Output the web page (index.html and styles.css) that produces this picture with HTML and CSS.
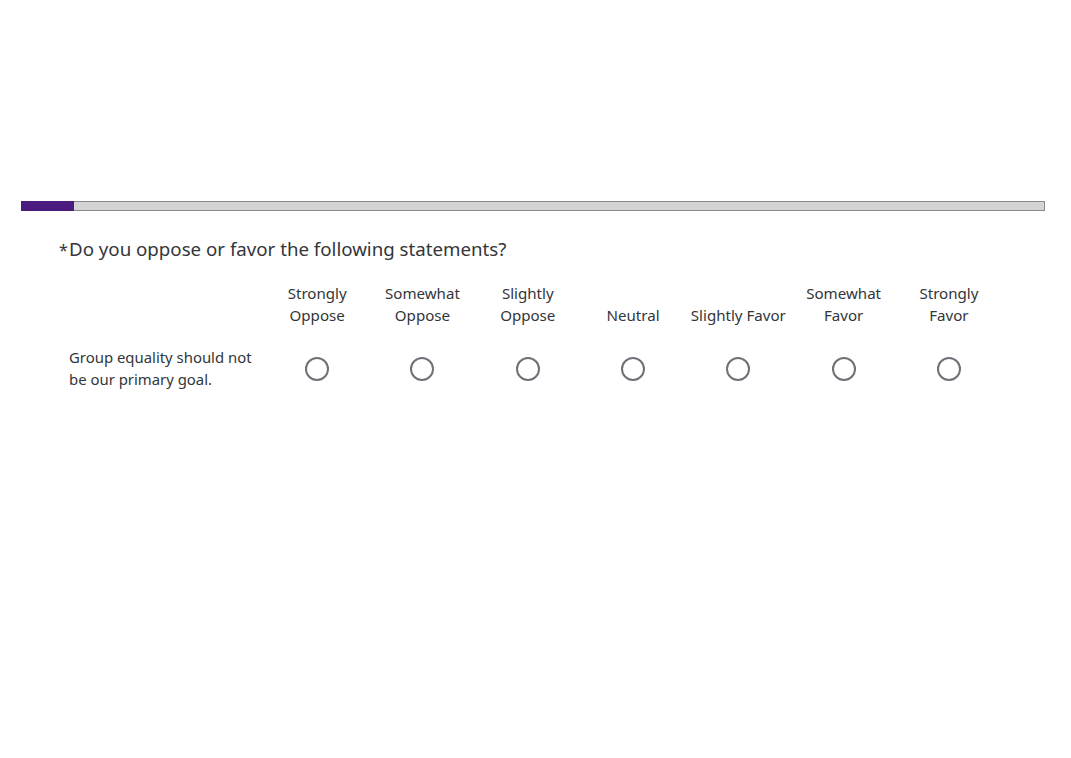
FILE: index.html
```html
<!DOCTYPE html>
<html>
<head>
<meta charset="utf-8">
<link rel="stylesheet" href="styles.css">
</head>
<body>
<div class="page">
  <div class="progress"><div class="progress-fill"></div></div>
  <div class="question">
    <div class="qtext"><span class="req">*</span>Do you oppose or favor the following statements?</div>
    <div class="matrix">
      <div class="row header">
        <div class="label"></div>
        <div class="col">Strongly<br>Oppose</div>
        <div class="col">Somewhat<br>Oppose</div>
        <div class="col">Slightly<br>Oppose</div>
        <div class="col">Neutral</div>
        <div class="col">Slightly Favor</div>
        <div class="col">Somewhat<br>Favor</div>
        <div class="col">Strongly<br>Favor</div>
      </div>
      <div class="row answers">
        <div class="label">Group equality should not be our primary goal.</div>
        <div class="col"><span class="radio"></span></div>
        <div class="col"><span class="radio"></span></div>
        <div class="col"><span class="radio"></span></div>
        <div class="col"><span class="radio"></span></div>
        <div class="col"><span class="radio"></span></div>
        <div class="col"><span class="radio"></span></div>
        <div class="col"><span class="radio"></span></div>
      </div>
    </div>
  </div>
</div>
</body>
</html>
```
FILE: styles.css
```css
html, body {
  margin: 0;
  padding: 0;
  background: #fff;
}
body {
  font-family: "Noto Sans", "Open Sans", sans-serif;
  color: #32363a;
}
.page {
  padding: 201px 26px 0 21px;
}
.progress {
  height: 8px;
  background: #d4d4d4;
  border: 1px solid #89898f;
  border-left: none;
}
.progress-fill {
  width: 53px;
  height: 10px;
  margin-top: -1px;
  background: #4a1c80;
}
.question {
  padding: 26px 0 0 37px;
}
.qtext {
  font-size: 18.7px;
  line-height: 24px;
}
.req {
  display: inline-block;
  width: 10px;
  margin-left: 1px;
  font-size: 16px;
}
.matrix {
  margin-top: 20px;
  margin-left: 11px;
}
.row {
  display: grid;
  grid-template-columns: 195.5px repeat(7, 105.3px);
  align-items: end;
}
.header .col {
  text-align: center;
  font-size: 15.1px;
  line-height: 22px;
}
.answers {
  margin-top: 20px;
  align-items: center;
}
.answers .label {
  font-size: 14.9px;
  line-height: 22px;
  padding-right: 4px;
}
.answers .col {
  display: flex;
  justify-content: center;
  padding-top: 2px;
}
.radio {
  width: 20px;
  height: 20px;
  border: 2px solid #6f7178;
  border-radius: 50%;
  display: block;
}
```
